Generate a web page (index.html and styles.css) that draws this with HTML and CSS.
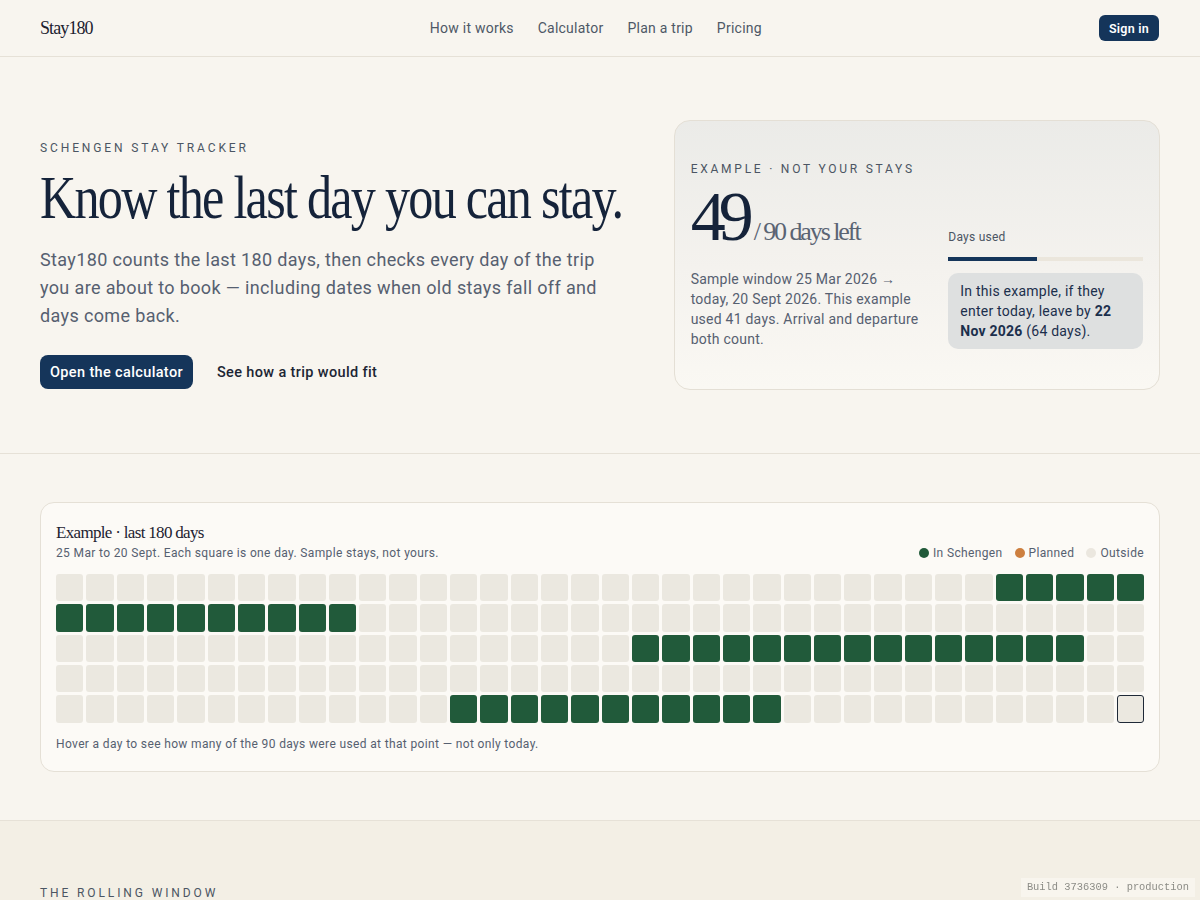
FILE: index.html
```html
<!DOCTYPE html>
<html lang="en">
<head>
<meta charset="utf-8">
<title>Stay180 — Schengen stay tracker</title>
<link rel="stylesheet" href="styles.css">
</head>
<body>
<header class="topbar">
  <a class="logo" href="#">Stay180</a>
  <nav class="nav">
    <a href="#">How it works</a>
    <a href="#">Calculator</a>
    <a href="#">Plan a trip</a>
    <a href="#">Pricing</a>
  </nav>
  <a class="btn-signin" href="#">Sign in</a>
</header>

<main>
  <section class="hero">
    <div class="hero-copy">
      <p class="eyebrow">Schengen stay tracker</p>
      <h1 class="headline">Know the last day you can stay.</h1>
      <p class="lede">Stay180 counts the last 180 days, then checks every day of the trip you are about to book — including dates when old stays fall off and days come back.</p>
      <div class="actions">
        <a class="btn-primary" href="#">Open the calculator</a>
        <a class="btn-text" href="#">See how a trip would fit</a>
      </div>
    </div>

    <aside class="sample-card">
      <p class="eyebrow eyebrow-wide">Example · not your stays</p>
      <div class="sample-body">
        <div class="sample-main">
          <div class="remaining">
            <span class="remaining-num">49</span>
            <span class="remaining-of">/ 90 days left</span>
          </div>
          <p class="sample-note">Sample window 25 Mar 2026 → today, 20 Sept 2026. This example used 41 days. Arrival and departure both count.</p>
        </div>
        <div class="sample-side">
          <p class="meter-label">Days used</p>
          <div class="meter"><div class="meter-fill" style="width: 45.6%"></div></div>
          <p class="callout">In this example, if they enter today, leave by <strong>22 Nov 2026</strong> (64 days).</p>
        </div>
      </div>
    </aside>
  </section>

  <section class="history">
    <div class="history-card">
      <div class="history-head">
        <div>
          <h2 class="history-title">Example · last 180 days</h2>
          <p class="history-sub">25 Mar to 20 Sept. Each square is one day. Sample stays, not yours.</p>
        </div>
        <ul class="legend">
          <li><span class="dot dot-in"></span>In Schengen</li>
          <li><span class="dot dot-planned"></span>Planned</li>
          <li><span class="dot dot-out"></span>Outside</li>
        </ul>
      </div>
      <div class="days" id="days"></div>
      <p class="history-foot">Hover a day to see how many of the 90 days were used at that point — not only today.</p>
    </div>
  </section>

  <section class="rolling">
    <p class="eyebrow">The rolling window</p>
  </section>
</main>

<div class="build-tag">Build 3736309 · production</div>

<script src="script.js"></script>
</body>
</html>
```

FILE: styles.css
```css
* { box-sizing: border-box; }

html, body {
  margin: 0;
  background: #f8f5ef;
  color: #16243a;
  font-family: Roboto, "Liberation Sans", sans-serif;
  letter-spacing: 0.015em;
}

a { color: inherit; text-decoration: none; }
p { margin: 0; }

/* ---------- top bar ---------- */
.topbar {
  height: 57px;
  padding: 0 41px 0 40px;
  display: flex;
  justify-content: space-between;
  align-items: center;
  border-bottom: 1px solid #e6e1d7;
}
.logo {
  font-family: "Liberation Serif", serif;
  font-size: 18px;
  letter-spacing: -0.05em;
  color: #1c2230;
}
.nav {
  display: flex;
  gap: 24px;
  font-size: 14px;
  color: #4e5866;
}
.btn-signin {
  background: #15355a;
  color: #fff;
  font-size: 12.5px;
  font-weight: 600;
  height: 26px;
  padding: 0 10px;
  border-radius: 6px;
  display: inline-flex;
  align-items: center;
}

/* ---------- hero ---------- */
.hero {
  padding: 63px 40px 63px;
  display: grid;
  grid-template-columns: minmax(0, 1.2fr) minmax(0, 1fr);
  gap: 50px;
  align-items: end;
  border-bottom: 1px solid #e6e1d7;
}
.eyebrow {
  font-size: 12px;
  letter-spacing: 0.24em;
  text-transform: uppercase;
  color: #4b5563;
  line-height: 16px;
}
.headline {
  margin: 7px 0 15px;
  font-family: "Liberation Serif", serif;
  font-weight: 400;
  font-size: 62px;
  line-height: 68px;
  letter-spacing: -0.035em;
  white-space: nowrap;
  color: #15233a;
  transform: scaleX(0.81);
  transform-origin: left center;
}
.lede {
  font-size: 18px;
  line-height: 28px;
  letter-spacing: 0.02em;
  color: #566070;
  max-width: 570px;
}
.actions {
  margin-top: 25px;
  margin-bottom: 1px;
  display: flex;
  align-items: center;
  gap: 14px;
}
.btn-primary {
  background: #15355a;
  color: #fff;
  font-size: 14.5px;
  font-weight: 500;
  letter-spacing: 0.025em;
  height: 34px;
  padding: 0 10px;
  border-radius: 8px;
  display: inline-flex;
  align-items: center;
}
.btn-text {
  font-size: 14.5px;
  font-weight: 500;
  letter-spacing: 0.025em;
  color: #1c2534;
  padding: 0 10px;
}

/* ---------- sample card ---------- */
.sample-card {
  border: 1px solid #e4dfd5;
  border-radius: 16px;
  padding: 40px 16px 40px;
  background: linear-gradient(180deg, #ebebe8 0%, #f4f2ee 55%, #faf8f3 100%);
}
.eyebrow-wide { letter-spacing: 0.23em; }
.sample-body {
  display: grid;
  grid-template-columns: minmax(0, 1.2fr) minmax(0, 1fr);
  gap: 24px;
  align-items: end;
}
.remaining {
  display: flex;
  align-items: baseline;
  gap: 7px;
  white-space: nowrap;
}
.remaining-num {
  font-family: "Liberation Serif", serif;
  font-size: 70px;
  line-height: 79px;
  letter-spacing: -0.1em;
  color: #15233a;
}
.remaining-of {
  font-family: "Liberation Serif", serif;
  font-size: 26px;
  letter-spacing: -0.08em;
  color: #5a6473;
}
.sample-note {
  margin-top: 13px;
  font-size: 14px;
  line-height: 20px;
  color: #566070;
}
.meter-label {
  font-size: 12px;
  line-height: 16px;
  color: #4b5563;
}
.meter {
  margin: 12px 0 12px;
  height: 4px;
  background: #ebe6dc;
}
.meter-fill {
  height: 100%;
  background: #15355a;
}
.callout {
  background: #dee0e0;
  border-radius: 10px;
  padding: 8px 12px;
  font-size: 14px;
  line-height: 20px;
  color: #1b2f4c;
}
.callout strong { font-weight: 700; }

/* ---------- 180-day history ---------- */
.history {
  padding: 48px 40px;
  border-bottom: 1px solid #e6e1d7;
}
.history-card {
  background: #fcfaf6;
  border: 1px solid #e5e0d6;
  border-radius: 14px;
  padding: 18px 15px 19px;
}
.history-head {
  display: flex;
  justify-content: space-between;
  align-items: flex-end;
}
.history-title {
  margin: 0;
  font-family: "Liberation Serif", serif;
  font-weight: 400;
  font-size: 17px;
  line-height: 24px;
  letter-spacing: -0.04em;
  color: #1c2230;
}
.history-sub {
  font-size: 12px;
  line-height: 16px;
  letter-spacing: 0.03em;
  color: #566070;
}
.legend {
  list-style: none;
  margin: 0;
  padding: 0;
  display: flex;
  gap: 12px;
  font-size: 12px;
  line-height: 16px;
  letter-spacing: 0.03em;
  color: #566070;
}
.legend li { display: flex; align-items: center; gap: 4px; }
.dot {
  width: 10px;
  height: 10px;
  border-radius: 50%;
  display: inline-block;
}
.dot-in { background: #215a3a; }
.dot-planned { background: #cd7f3f; }
.dot-out { background: #ebe7df; }

.days {
  margin-top: 13px;
  display: grid;
  grid-template-columns: repeat(36, 1fr);
  gap: 3px;
}
.day {
  aspect-ratio: 1;
  border-radius: 3px;
  background: #ebe8e0;
}
.day.in { background: #215a3a; }
.day.today { border: 1.5px solid #1f2937; }

.history-foot {
  margin-top: 13px;
  font-size: 12px;
  line-height: 16px;
  letter-spacing: 0.03em;
  color: #566070;
}

/* ---------- rolling window ---------- */
.rolling {
  background: #f3efe5;
  padding: 64px 40px;
  min-height: 200px;
}

.build-tag {
  position: fixed;
  right: 5px;
  bottom: 3px;
  padding: 2px 6px;
  font-family: "Liberation Mono", monospace;
  font-size: 10.4px;
  line-height: 15px;
  letter-spacing: 0;
  color: #8c8c86;
  background: rgba(248, 246, 240, 0.85);
}
```

FILE: script.js
```js
// 180 days, 36 per row. Ranges are sample stays (inclusive day indexes).
const stays = [[31, 45], [91, 105], [157, 167]];
const grid = document.getElementById('days');
for (let i = 0; i < 180; i++) {
  const cell = document.createElement('div');
  cell.className = 'day';
  if (stays.some(([a, b]) => i >= a && i <= b)) cell.classList.add('in');
  if (i === 179) cell.classList.add('today');
  grid.appendChild(cell);
}
```
